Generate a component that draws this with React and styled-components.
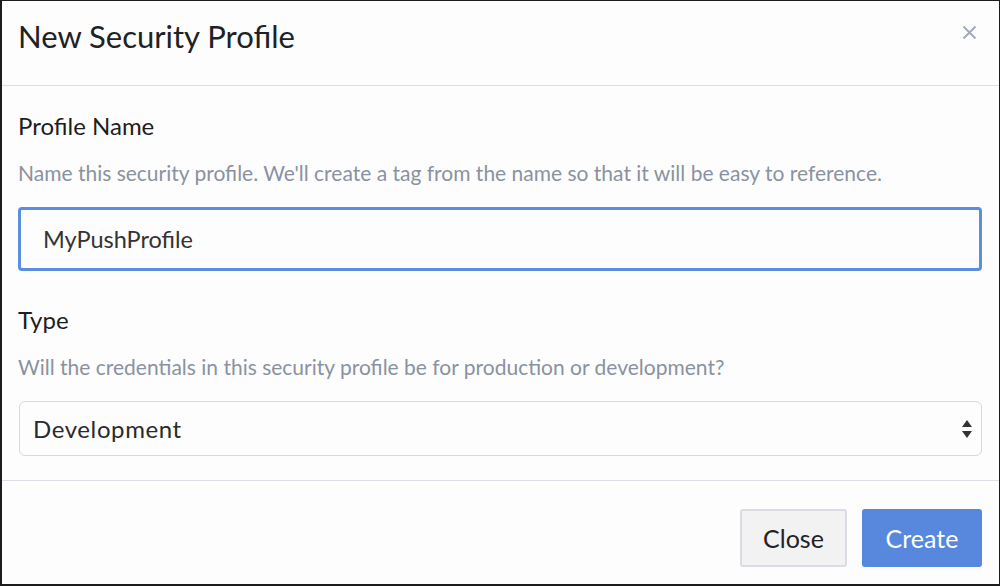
import React, { useState } from 'react';
import styled, { createGlobalStyle } from 'styled-components';

const GlobalStyle = createGlobalStyle`
  html, body {
    margin: 0;
    padding: 0;
    background: #fdfdfe;
  }
  * {
    box-sizing: border-box;
  }
`;

const Frame = styled.div`
  width: 1000px;
  height: 586px;
  display: flex;
  flex-direction: column;
  background: #fdfdfe;
  border: 1px solid #1c1c1c;
  border-left-width: 2px;
  border-bottom-width: 2px;
  font-family: Lato, "Noto Sans", sans-serif;
  color: #222;
`;

const Header = styled.div`
  height: 85px;
  flex: none;
  display: flex;
  align-items: flex-start;
  justify-content: space-between;
  padding: 17px 17px 0 16px;
  border-bottom: 1px solid #dcdfe6;
`;

const Title = styled.h1`
  margin: 0;
  font-size: 31px;
  line-height: 37px;
  font-weight: 400;
  color: #202124;
`;

const CloseX = styled.button`
  border: none;
  background: none;
  padding: 0;
  margin-top: 7px;
  margin-right: 5px;
  width: 15px;
  height: 15px;
  cursor: pointer;
  display: flex;
`;

const Body = styled.div`
  flex: 1;
  padding: 26px 17px 0 16px;
  border-bottom: 1px solid #dcdfe6;
  display: flex;
  flex-direction: column;
`;

const Label = styled.label`
  display: block;
  font-size: 24px;
  line-height: 28px;
  font-weight: 400;
  color: #1d1d1f;
  margin-top: ${(p) => p.$top || 0}px;
`;

const Help = styled.p`
  margin: 21px 0 22px 0;
  font-size: 21px;
  line-height: 24px;
  color: #8a92a0;
`;

const TextInput = styled.input`
  width: 100%;
  height: 64px;
  border: 3px solid #5b8de0;
  border-radius: 4px;
  padding: 0 22px;
  font-family: inherit;
  font-size: 23.5px;
  color: #333;
  background: #fdfdfe;
  outline: none;
`;

const SelectWrap = styled.div`
  position: relative;
  height: 55px;
  margin-left: 1px;
`;

const Select = styled.select`
  appearance: none;
  width: 100%;
  height: 100%;
  border: 1px solid #d6d9e0;
  border-radius: 6px;
  padding: 0 13px;
  font-family: inherit;
  font-size: 24px;
  letter-spacing: 0.6px;
  color: #2a2a2a;
  background: #fdfdfe;
  outline: none;
`;

const Arrows = styled.svg`
  position: absolute;
  right: 9px;
  top: 18px;
  pointer-events: none;
`;

const Footer = styled.div`
  height: 103px;
  flex: none;
  display: flex;
  justify-content: flex-end;
  align-items: flex-start;
  gap: 15px;
  padding: 28px 17px 0 0;
`;

const Button = styled.button`
  height: 58px;
  min-width: ${(p) => p.$width}px;
  padding: 0 20px;
  font-family: inherit;
  font-size: 25px;
  border-radius: 3px;
  cursor: pointer;
  border: ${(p) => (p.$primary ? '0' : '2px solid #d9dce3')};
  background: ${(p) => (p.$primary ? '#5788de' : '#f2f2f3')};
  color: ${(p) => (p.$primary ? '#fff' : '#222')};
`;

export default function App() {
  const [name, setName] = useState('MyPushProfile');
  const [type, setType] = useState('development');

  return (
    <>
      <GlobalStyle />
      <Frame>
        <Header>
          <Title>New Security Profile</Title>
          <CloseX aria-label="Close">
            <svg width="15" height="15" viewBox="0 0 15 15">
              <path d="M1.5 1.5L13.5 13.5M13.5 1.5L1.5 13.5" stroke="#a3abba" strokeWidth="2" />
            </svg>
          </CloseX>
        </Header>
        <Body>
          <Label htmlFor="pname">Profile Name</Label>
          <Help>Name this security profile. We'll create a tag from the name so that it will be easy to reference.</Help>
          <TextInput id="pname" value={name} onChange={(e) => setName(e.target.value)} />
          <Label $top={35} htmlFor="ptype">Type</Label>
          <Help>Will the credentials in this security profile be for production or development?</Help>
          <SelectWrap>
            <Select id="ptype" value={type} onChange={(e) => setType(e.target.value)}>
              <option value="development">Development</option>
              <option value="production">Production</option>
            </Select>
            <Arrows width="12" height="20" viewBox="0 0 12 20">
              <path d="M6 1L11 8H1Z M6 19L11 12H1Z" fill="#333" />
            </Arrows>
          </SelectWrap>
        </Body>
        <Footer>
          <Button $width={107}>Close</Button>
          <Button $width={120} $primary>Create</Button>
        </Footer>
      </Frame>
    </>
  );
}
